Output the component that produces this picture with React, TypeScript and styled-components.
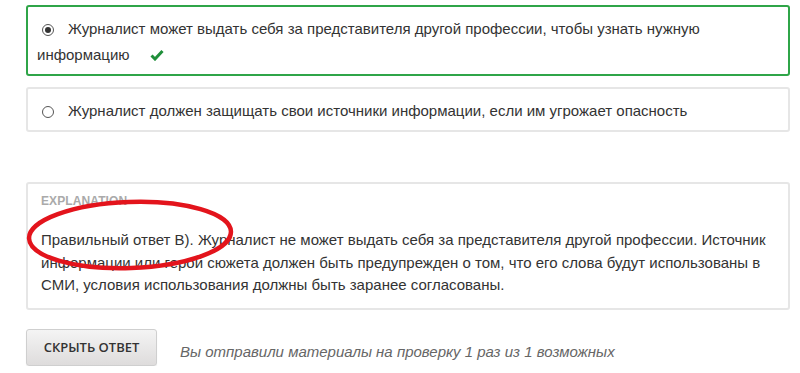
import React from 'react';
import styled, { createGlobalStyle } from 'styled-components';

const GlobalStyle = createGlobalStyle`
  html, body {
    margin: 0;
    padding: 0;
    background: #fff;
  }
  body {
    font-family: "Liberation Sans", Arial, sans-serif;
    color: #333;
  }
`;

const Page = styled.div`
  padding: 5px 10px 0 26px;
  width: 800px;
  box-sizing: border-box;
`;

const Choices = styled.div`
  display: flex;
  flex-direction: column;
  gap: 11px;
`;

const Choice = styled.label<{ $correct?: boolean }>`
  display: block;
  padding: 9px 14px 6px 9px;
  border: 2px solid ${(p) => (p.$correct ? '#2fa548' : '#e6e6e6')};
  border-radius: 3px;
  font-size: 15px;
  line-height: 26px;
  color: #333;
`;

const Radio = styled.span<{ $checked?: boolean }>`
  display: inline-flex;
  vertical-align: 1px;
  width: 12px;
  height: 12px;
  margin: 0 14px 0 5px;
  box-sizing: border-box;
  border: 1px solid #555;
  border-radius: 50%;
  background: #fff;
  align-items: center;
  justify-content: center;

  &::after {
    content: '';
    width: 6px;
    height: 6px;
    border-radius: 50%;
    background: ${(p) => (p.$checked ? '#333' : 'transparent')};
  }
`;

const Check = styled.svg`
  width: 14px;
  height: 12px;
  margin-left: 20px;
  vertical-align: -1px;
`;

const Explanation = styled.div`
  position: relative;
  margin-top: 50px;
  padding: 10px 13px 11px;
  border: 2px solid #e6e6e6;
  border-radius: 3px;
`;

const Label = styled.div`
  font-size: 12px;
  font-weight: bold;
  line-height: 14px;
  color: #aaa;
  letter-spacing: 0.1px;
`;

const ExplanationText = styled.p`
  margin: 21px 0 0;
  font-size: 15px;
  line-height: 22.5px;
  color: #333;
`;

const Circle = styled.svg`
  position: absolute;
  left: -2px;
  top: 14px;
  width: 215px;
  height: 76px;
  overflow: visible;
  pointer-events: none;
`;

const Actions = styled.div`
  display: flex;
  align-items: center;
  gap: 23px;
  margin-top: 19px;
`;

const Button = styled.button`
  width: 131px;
  height: 37px;
  border: 1px solid #cfcfcf;
  border-radius: 3px;
  background: linear-gradient(#f4f4f4, #dedcdc);
  box-shadow: 0 1px 1px rgba(0, 0, 0, 0.08);
  font-family: "Open Sans", "Liberation Sans", sans-serif;
  font-size: 13px;
  font-weight: 600;
  color: #333;
  text-transform: uppercase;
  cursor: pointer;
`;

const Status = styled.span`
  font-size: 15px;
  font-style: italic;
  color: #666;
  margin-top: 8px;
`;

const App: React.FC = () => {
  return (
    <>
      <GlobalStyle />
      <Page>
        <Choices>
          <Choice $correct>
            <Radio $checked />
            Журналист может выдать себя за представителя другой профессии, чтобы узнать нужную
            информацию
            <Check viewBox="0 0 14 12">
              <path d="M1.5 6.5 L5 10 L12.5 2" fill="none" stroke="#1f8f3a" strokeWidth="3" />
            </Check>
          </Choice>
          <Choice>
            <Radio />
            Журналист должен защищать свои источники информации, если им угрожает опасность
          </Choice>
        </Choices>

        <Explanation>
          <Label>EXPLANATION</Label>
          <ExplanationText>
            Правильный ответ В). Журналист не может выдать себя за представителя другой профессии.
            Источник информации или герой сюжета должен быть предупрежден о том, что его слова будут
            использованы в СМИ, условия использования должны быть заранее согласованы.
          </ExplanationText>
          <Circle viewBox="0 0 215 76">
            <ellipse
              cx="104"
              cy="37"
              rx="101"
              ry="33"
              fill="none"
              stroke="#e3141c"
              strokeWidth="4.5"
              transform="rotate(-2 104 37)"
            />
          </Circle>
        </Explanation>

        <Actions>
          <Button>Скрыть ответ</Button>
          <Status>Вы отправили материалы на проверку 1 раз из 1 возможных</Status>
        </Actions>
      </Page>
    </>
  );
};

export default App;
